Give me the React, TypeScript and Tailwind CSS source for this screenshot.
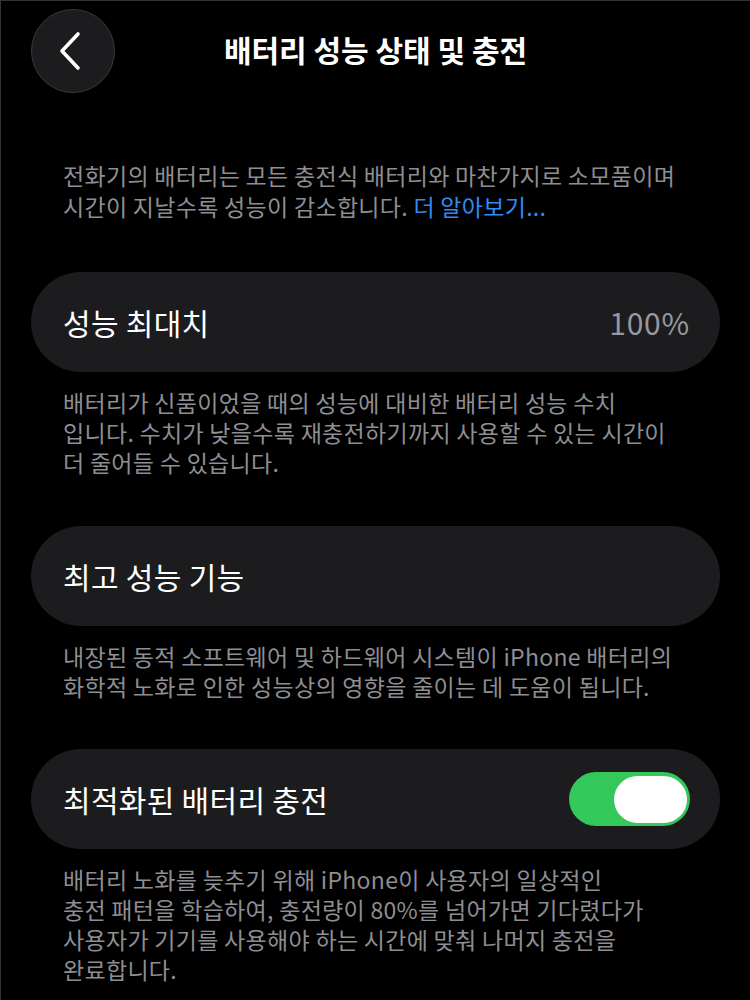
import { useState } from "react";

const FONT = { fontFamily: '"Noto Sans CJK KR", "Noto Sans", sans-serif' };

const BackIcon = () => (
	<svg width="24" height="40" viewBox="0 0 24 40" fill="none">
		<path
			d="M20 3 L4 20 L20 37"
			stroke="white"
			strokeWidth="3.6"
			strokeLinecap="round"
			strokeLinejoin="round"
		/>
	</svg>
);

const Toggle = ({ on, onClick }: { on: boolean; onClick: () => void }) => (
	<button
		onClick={onClick}
		className={`flex h-[54px] w-[121px] items-center rounded-full p-[3px] ${
			on ? "justify-end bg-[#34c759]" : "justify-start bg-[#39393d]"
		}`}
	>
		<span className="h-[47px] w-[73px] rounded-full bg-white" />
	</button>
);

const Card = ({ children }: { children: React.ReactNode }) => (
	<div className="flex h-[100px] items-center justify-between rounded-full bg-[#1c1c1e] pr-[30px] pl-[32px]">
		{children}
	</div>
);

const Footnote = ({ children }: { children: React.ReactNode }) => (
	<p className="mt-[15px] px-[32px] text-[23px] leading-[30px] tracking-[0.3px] text-[#8e8e93]">
		{children}
	</p>
);

const App = () => {
	const [optimized, setOptimized] = useState(true);

	return (
		<div
			className="min-h-[1000px] w-[750px] border-t border-l border-[#343434] bg-black px-[30px] text-white"
			style={FONT}
		>
			{/* Header */}
			<div className="grid grid-cols-[84px_1fr_84px] items-center pt-[8px]">
				<button className="flex h-[84px] w-[84px] items-center justify-center rounded-full border border-[#3a3a3c] bg-[#1c1c1e] pr-[6px]">
					<BackIcon />
				</button>
				<h1 className="-mt-[4px] text-center text-[30px] font-semibold">
					배터리 성능 상태 및 충전
				</h1>
				<div />
			</div>

			<p className="mt-[67px] px-[32px] text-[23px] leading-[31px] tracking-[0.3px] text-[#8e8e93]">
				전화기의 배터리는 모든 충전식 배터리와 마찬가지로 소모품이며
				<br />
				시간이 지날수록 성능이 감소합니다.{" "}
				<span className="text-[#2f8cf5]">더 알아보기...</span>
			</p>

			<div className="mt-[50px]">
				<Card>
					<span className="text-[30px] tracking-[0.3px]">성능 최대치</span>
					<span className="text-[30px] tracking-[0.8px] text-[#98989e]">
						100%
					</span>
				</Card>
				<Footnote>
					배터리가 신품이었을 때의 성능에 대비한 배터리 성능 수치
					<br />
					입니다. 수치가 낮을수록 재충전하기까지 사용할 수 있는 시간이
					<br />
					더 줄어들 수 있습니다.
				</Footnote>
			</div>

			<div className="mt-[49px]">
				<Card>
					<span className="text-[30px] tracking-[0.3px]">최고 성능 기능</span>
				</Card>
				<Footnote>
					내장된 동적 소프트웨어 및 하드웨어 시스템이 iPhone 배터리의
					<br />
					화학적 노화로 인한 성능상의 영향을 줄이는 데 도움이 됩니다.
				</Footnote>
			</div>

			<div className="mt-[48px]">
				<Card>
					<span className="text-[30px] tracking-[0.3px]">
						최적화된 배터리 충전
					</span>
					<Toggle on={optimized} onClick={() => setOptimized(!optimized)} />
				</Card>
				<Footnote>
					배터리 노화를 늦추기 위해 iPhone이 사용자의 일상적인
					<br />
					충전 패턴을 학습하여, 충전량이 80%를 넘어가면 기다렸다가
					<br />
					사용자가 기기를 사용해야 하는 시간에 맞춰 나머지 충전을
					<br />
					완료합니다.
				</Footnote>
			</div>
		</div>
	);
};

export default App;
